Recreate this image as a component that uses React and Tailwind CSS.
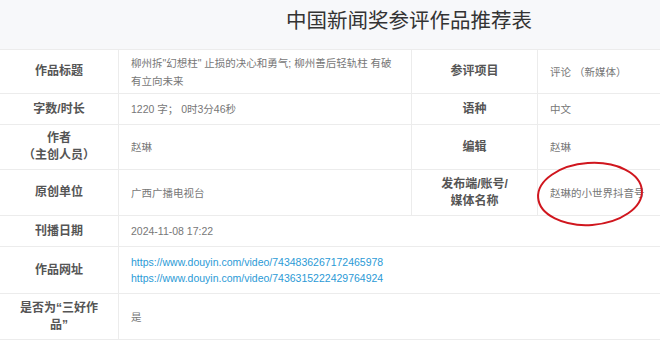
import React from 'react';

const FONT = { fontFamily: '"Liberation Sans", "Noto Sans CJK SC", sans-serif' };

const label = 'border border-[#ececec] text-center font-bold text-[12px] leading-[17px] text-[#555] px-2';
const value = 'border border-[#ececec] text-left text-[10.5px] leading-[18px] text-[#777] px-3 whitespace-nowrap';

export default function App() {
  return (
    <div className="relative w-[660px] h-[340px] overflow-hidden bg-white" style={FONT}>
      <div className="h-[49px] bg-[#f7f8fa] pl-[286px] pt-[8px] text-[20.5px] leading-[26px] text-[#333]">
        中国新闻奖参评作品推荐表
      </div>
      <table className="w-[661px] border-collapse table-fixed -ml-px">
        <colgroup>
          <col className="w-[119px]" />
          <col className="w-[293px]" />
          <col className="w-[126px]" />
          <col className="w-[123px]" />
        </colgroup>
        <tbody>
          <tr className="h-[44px]">
            <td className={label}>作品标题</td>
            <td className={value}>
              柳州拆"幻想柱" 止损的决心和勇气; 柳州善后轻轨柱 有破<br />有立向未来
            </td>
            <td className={label}>参评项目</td>
            <td className={value}>评论 （新媒体）</td>
          </tr>
          <tr className="h-[31px]">
            <td className={label}>字数/时长</td>
            <td className={value}>1220 字； 0时3分46秒</td>
            <td className={label}>语种</td>
            <td className={value}>中文</td>
          </tr>
          <tr className="h-[45px]">
            <td className={label}>作者<br />（主创人员）</td>
            <td className={value}>赵琳</td>
            <td className={label}>编辑</td>
            <td className={value}>赵琳</td>
          </tr>
          <tr className="h-[46px]">
            <td className={label}>原创单位</td>
            <td className={value}>广西广播电视台</td>
            <td className={label}>发布端/账号/<br />媒体名称</td>
            <td className={value}>赵琳的小世界抖音号</td>
          </tr>
          <tr className="h-[31px]">
            <td className={label}>刊播日期</td>
            <td colSpan={3} className={value}>2024-11-08 17:22</td>
          </tr>
          <tr className="h-[47px]">
            <td className={label}>作品网址</td>
            <td colSpan={3} className="border border-[#ececec] px-3 text-[10.5px] leading-[16px] text-[#2b9ad6]">
              <div>https://www.douyin.com/video/7434836267172465978</div>
              <div>https://www.douyin.com/video/7436315222429764924</div>
            </td>
          </tr>
          <tr className="h-[46px]">
            <td className={label}>是否为“三好作<br />品”</td>
            <td colSpan={3} className={value}>是</td>
          </tr>
        </tbody>
      </table>
      {/* red circle marker */}
      <svg className="absolute left-[532px] top-[158px]" width="116" height="72" viewBox="0 0 116 72">
        <ellipse cx="58" cy="36" rx="52" ry="31" fill="none" stroke="#d0161e" strokeWidth="2" transform="rotate(-4 58 36)" />
      </svg>
    </div>
  );
}
